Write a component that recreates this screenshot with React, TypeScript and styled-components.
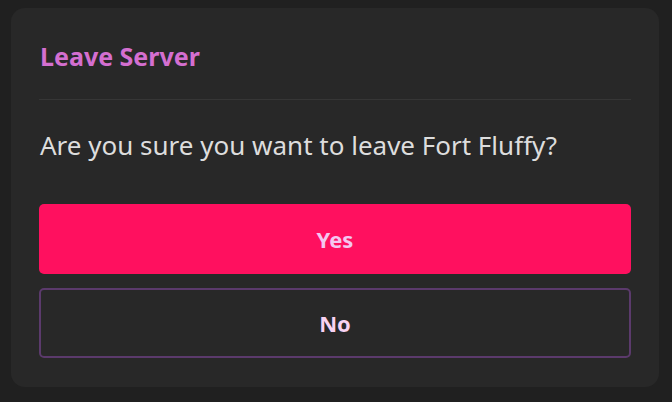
import React from 'react';
import styled, { createGlobalStyle } from 'styled-components';

const GlobalStyle = createGlobalStyle`
  html, body {
    margin: 0;
    padding: 0;
    background: #202020;
  }
  body {
    font-family: 'Noto Sans', 'Open Sans', sans-serif;
  }
`;

const Page = styled.div`
  width: 672px;
  height: 402px;
  box-sizing: border-box;
  padding: 8px 13px 15px 11px;
  display: flex;
`;

const Dialog = styled.div`
  flex: 1;
  background: #282828;
  border-radius: 14px;
  padding: 30px 28px 29px;
  display: flex;
  flex-direction: column;
`;

const Header = styled.div`
  padding-bottom: 25px;
  border-bottom: 1px solid #363636;
`;

const Title = styled.h2`
  margin: 0;
  font-size: 25px;
  line-height: 36px;
  font-weight: 700;
  color: #d46fd0;
  padding-left: 1px;
`;

const Message = styled.p`
  margin: 27px 0 0 1px;
  font-size: 26px;
  line-height: 36px;
  font-weight: 400;
  color: #dddddd;
`;

const Actions = styled.div`
  margin-top: 41px;
  display: flex;
  flex-direction: column;
  gap: 14px;
`;

const Button = styled.button<{ $primary?: boolean }>`
  height: 70px;
  border-radius: 5px;
  font-family: inherit;
  font-size: 22px;
  font-weight: 700;
  cursor: pointer;
  background: ${({ $primary }) => ($primary ? '#ff105f' : 'transparent')};
  color: ${({ $primary }) => ($primary ? '#f4c6f0' : '#f7d2f2')};
  border: ${({ $primary }) => ($primary ? 'none' : '2px solid #5b3a6c')};
`;

export default function App() {
  return (
    <>
      <GlobalStyle />
      <Page>
        <Dialog>
          <Header>
            <Title>Leave Server</Title>
          </Header>
          <Message>Are you sure you want to leave Fort Fluffy?</Message>
          <Actions>
            <Button $primary>Yes</Button>
            <Button>No</Button>
          </Actions>
        </Dialog>
      </Page>
    </>
  );
}
